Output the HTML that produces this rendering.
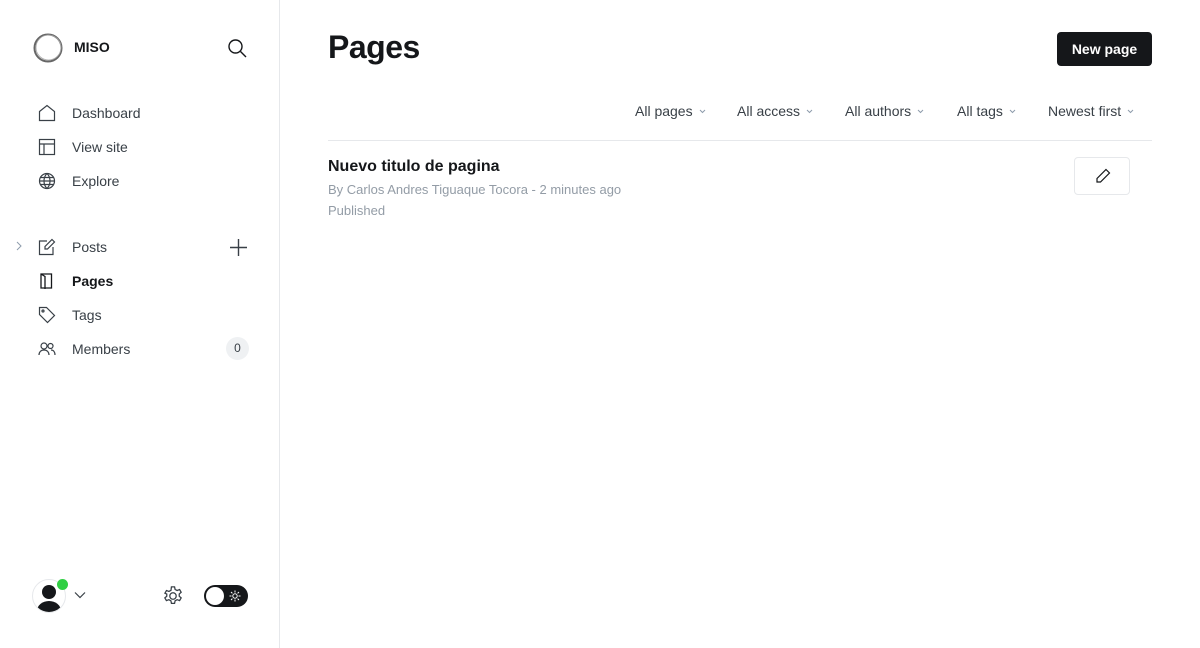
<!DOCTYPE html>
<html><head><meta charset="utf-8"><style>
*{box-sizing:border-box;margin:0;padding:0}
body{width:1200px;height:648px;background:#fff;font-family:"Liberation Sans",sans-serif;color:#15171a;position:relative;overflow:hidden}
.side{position:absolute;left:0;top:0;width:280px;height:648px;border-right:1px solid #e6e8eb}
.abs{position:absolute}
.nav{position:absolute;left:72px;font-size:14px;color:#394047}
.ic{position:absolute;left:38px}
svg{display:block}
.filt{position:absolute;top:103px;font-size:14px;color:#394047;display:flex;align-items:center}
.filt svg{margin-left:6px}
</style></head><body>
<div class="side">
  <svg class="abs" style="left:32px;top:32px" width="32" height="32" viewBox="0 0 32 32"><circle cx="16" cy="16" r="13.5" fill="none" stroke="#666" stroke-width="2"/><circle cx="16.5" cy="15.5" r="12.5" fill="none" stroke="#aaa" stroke-width="0.8"/></svg>
  <div class="abs" style="left:74px;top:39px;font-size:14px;font-weight:bold">MISO</div>
  <svg class="abs" style="left:227px;top:38px" width="20" height="20" viewBox="0 0 20 20" fill="none" stroke="#15171a" stroke-width="1.4"><circle cx="8.5" cy="8.5" r="6.5"/><path d="M13.5 13.5L19 19"/></svg>

  <svg class="ic" style="top:104px" width="18" height="18" viewBox="0 0 18 18" fill="none" stroke="#394047" stroke-width="1.2"><path d="M1.5 7.5L9 1.5l7.5 6V16.5h-15z"/></svg>
  <div class="nav" style="top:105px">Dashboard</div>
  <svg class="ic" style="top:138px" width="18" height="18" viewBox="0 0 18 18" fill="none" stroke="#394047" stroke-width="1.2"><rect x="1.5" y="1.5" width="15" height="15"/><path d="M1.5 6h15M6 6v10.5"/></svg>
  <div class="nav" style="top:139px">View site</div>
  <svg class="ic" style="top:172px" width="18" height="18" viewBox="0 0 18 18" fill="none" stroke="#394047" stroke-width="1.2"><circle cx="9" cy="9" r="7.5"/><path d="M1.5 9h15M2.5 5.5h13M2.5 12.5h13M9 1.5c-4 4-4 11 0 15M9 1.5c4 4 4 11 0 15"/></svg>
  <div class="nav" style="top:173px">Explore</div>

  <svg class="abs" style="left:15px;top:240px" width="8" height="12" viewBox="0 0 8 12" fill="none" stroke="#8e9cac" stroke-width="1"><path d="M2 2l4 4-4 4"/></svg>
  <svg class="ic" style="top:238px" width="18" height="18" viewBox="0 0 18 18" fill="none" stroke="#394047" stroke-width="1.2"><path d="M9 3H1.5v13.5H15V9"/><path d="M14 1.5l2.5 2.5-7 7H7V8.5z"/></svg>
  <div class="nav" style="top:239px">Posts</div>
  <svg class="abs" style="left:229px;top:238px" width="19" height="19" viewBox="0 0 19 19" stroke="#394047" stroke-width="1.4"><path d="M9.5 1v17M1 9.5h17"/></svg>
  <svg class="ic" style="top:272px" width="18" height="18" viewBox="0 0 18 18" fill="none" stroke="#15171a" stroke-width="1.3"><path d="M3 2h10.5v14H3zM3 2l4 2.5V17"/></svg>
  <div class="nav" style="top:273px;font-weight:bold;color:#15171a">Pages</div>
  <svg class="ic" style="top:306px" width="18" height="18" viewBox="0 0 18 18" fill="none" stroke="#394047" stroke-width="1.2"><path d="M1.5 1.5h7l8 8-7 7-8-8z"/><circle cx="5" cy="5" r="1"/></svg>
  <div class="nav" style="top:307px">Tags</div>
  <svg class="ic" style="top:341px" width="18" height="16" viewBox="0 0 18 16" fill="none" stroke="#394047" stroke-width="1.2"><circle cx="6" cy="5" r="3"/><path d="M1 14c0-3 2-5 5-5s5 2 5 5"/><circle cx="12.5" cy="5" r="2.5"/><path d="M13 9c2.5 0 4 2 4 5"/></svg>
  <div class="nav" style="top:341px">Members</div>
  <div class="abs" style="left:226px;top:337px;width:23px;height:23px;border-radius:12px;background:#eff1f3;font-size:12px;color:#394047;text-align:center;line-height:23px">0</div>

  <div class="abs" style="left:32px;top:579px;width:34px;height:34px;border-radius:50%;border:1px solid #e6e8eb;overflow:hidden;background:#fff">
    <div class="abs" style="left:9px;top:5px;width:14px;height:14px;border-radius:50%;background:#15171a"></div>
    <div class="abs" style="left:4px;top:21px;width:24px;height:20px;border-radius:50%;background:#15171a"></div>
  </div>
  <div class="abs" style="left:57px;top:579px;width:11px;height:11px;border-radius:50%;background:#30cf43"></div>
  <svg class="abs" style="left:74px;top:591px" width="12" height="8" viewBox="0 0 12 8" fill="none" stroke="#394047" stroke-width="1.2"><path d="M1 1.5l5 5 5-5"/></svg>
  <svg class="abs" style="left:162px;top:585px" width="22" height="22" viewBox="0 0 24 24" fill="none" stroke="#394047" stroke-width="1.4"><circle cx="12" cy="12" r="3.5"/><path d="M10.3 2h3.4l.6 2.8 2.2 1.2 2.7-1 1.7 2.9-2.1 1.9v2.4l2.1 1.9-1.7 2.9-2.7-1-2.2 1.2-.6 2.8h-3.4l-.6-2.8-2.2-1.2-2.7 1-1.7-2.9 2.1-1.9v-2.4L3.2 8.9l1.7-2.9 2.7 1 2.2-1.2z"/></svg>
  <div class="abs" style="left:204px;top:585px;width:44px;height:22px;border-radius:11px;background:#15171a">
    <div class="abs" style="left:2px;top:2px;width:18px;height:18px;border-radius:50%;background:#fff"></div>
    <svg class="abs" style="left:25px;top:5px" width="12" height="12" viewBox="0 0 12 12" fill="none" stroke="#fff" stroke-width="1"><circle cx="6" cy="6" r="2.2"/><path d="M6 0.5v2M6 9.5v2M0.5 6h2M9.5 6h2M2 2l1.4 1.4M8.6 8.6L10 10M2 10l1.4-1.4M8.6 3.4L10 2"/></svg>
  </div>
</div>

<div class="abs" style="left:328px;top:29px;font-size:32px;font-weight:bold;letter-spacing:-0.5px">Pages</div>
<div class="abs" style="left:1057px;top:32px;width:95px;height:34px;background:#15171a;border-radius:4px;color:#fff;font-size:14px;font-weight:bold;text-align:center;line-height:34px">New page</div>

<div class="filt" style="left:635px">All pages<svg width="7" height="5" viewBox="0 0 7 5" fill="none" stroke="#8e9cac" stroke-width="1"><path d="M1 1l2.5 2.5L6 1"/></svg></div>
<div class="filt" style="left:737px">All access<svg width="7" height="5" viewBox="0 0 7 5" fill="none" stroke="#8e9cac" stroke-width="1"><path d="M1 1l2.5 2.5L6 1"/></svg></div>
<div class="filt" style="left:845px">All authors<svg width="7" height="5" viewBox="0 0 7 5" fill="none" stroke="#8e9cac" stroke-width="1"><path d="M1 1l2.5 2.5L6 1"/></svg></div>
<div class="filt" style="left:957px">All tags<svg width="7" height="5" viewBox="0 0 7 5" fill="none" stroke="#8e9cac" stroke-width="1"><path d="M1 1l2.5 2.5L6 1"/></svg></div>
<div class="filt" style="left:1048px">Newest first<svg width="7" height="5" viewBox="0 0 7 5" fill="none" stroke="#8e9cac" stroke-width="1"><path d="M1 1l2.5 2.5L6 1"/></svg></div>
<div class="abs" style="left:328px;top:140px;width:824px;height:1px;background:#e6e8eb"></div>

<div class="abs" style="left:328px;top:158px;font-size:16px;font-weight:bold;color:#15171a">Nuevo titulo de pagina</div>
<div class="abs" style="left:328px;top:182px;font-size:13px;color:#939ca6">By Carlos Andres Tiguaque Tocora - 2 minutes ago</div>
<div class="abs" style="left:328px;top:203px;font-size:13px;color:#939ca6">Published</div>
<div class="abs" style="left:1074px;top:157px;width:56px;height:38px;border:1px solid #e6e8eb;border-radius:4px">
  <svg class="abs" style="left:20px;top:10px" width="16" height="16" viewBox="0 0 16 16" fill="none" stroke="#15171a" stroke-width="1.2"><path d="M11 1.5l3.5 3.5-9 9H2v-3.5z"/></svg>
</div>
</body></html>
